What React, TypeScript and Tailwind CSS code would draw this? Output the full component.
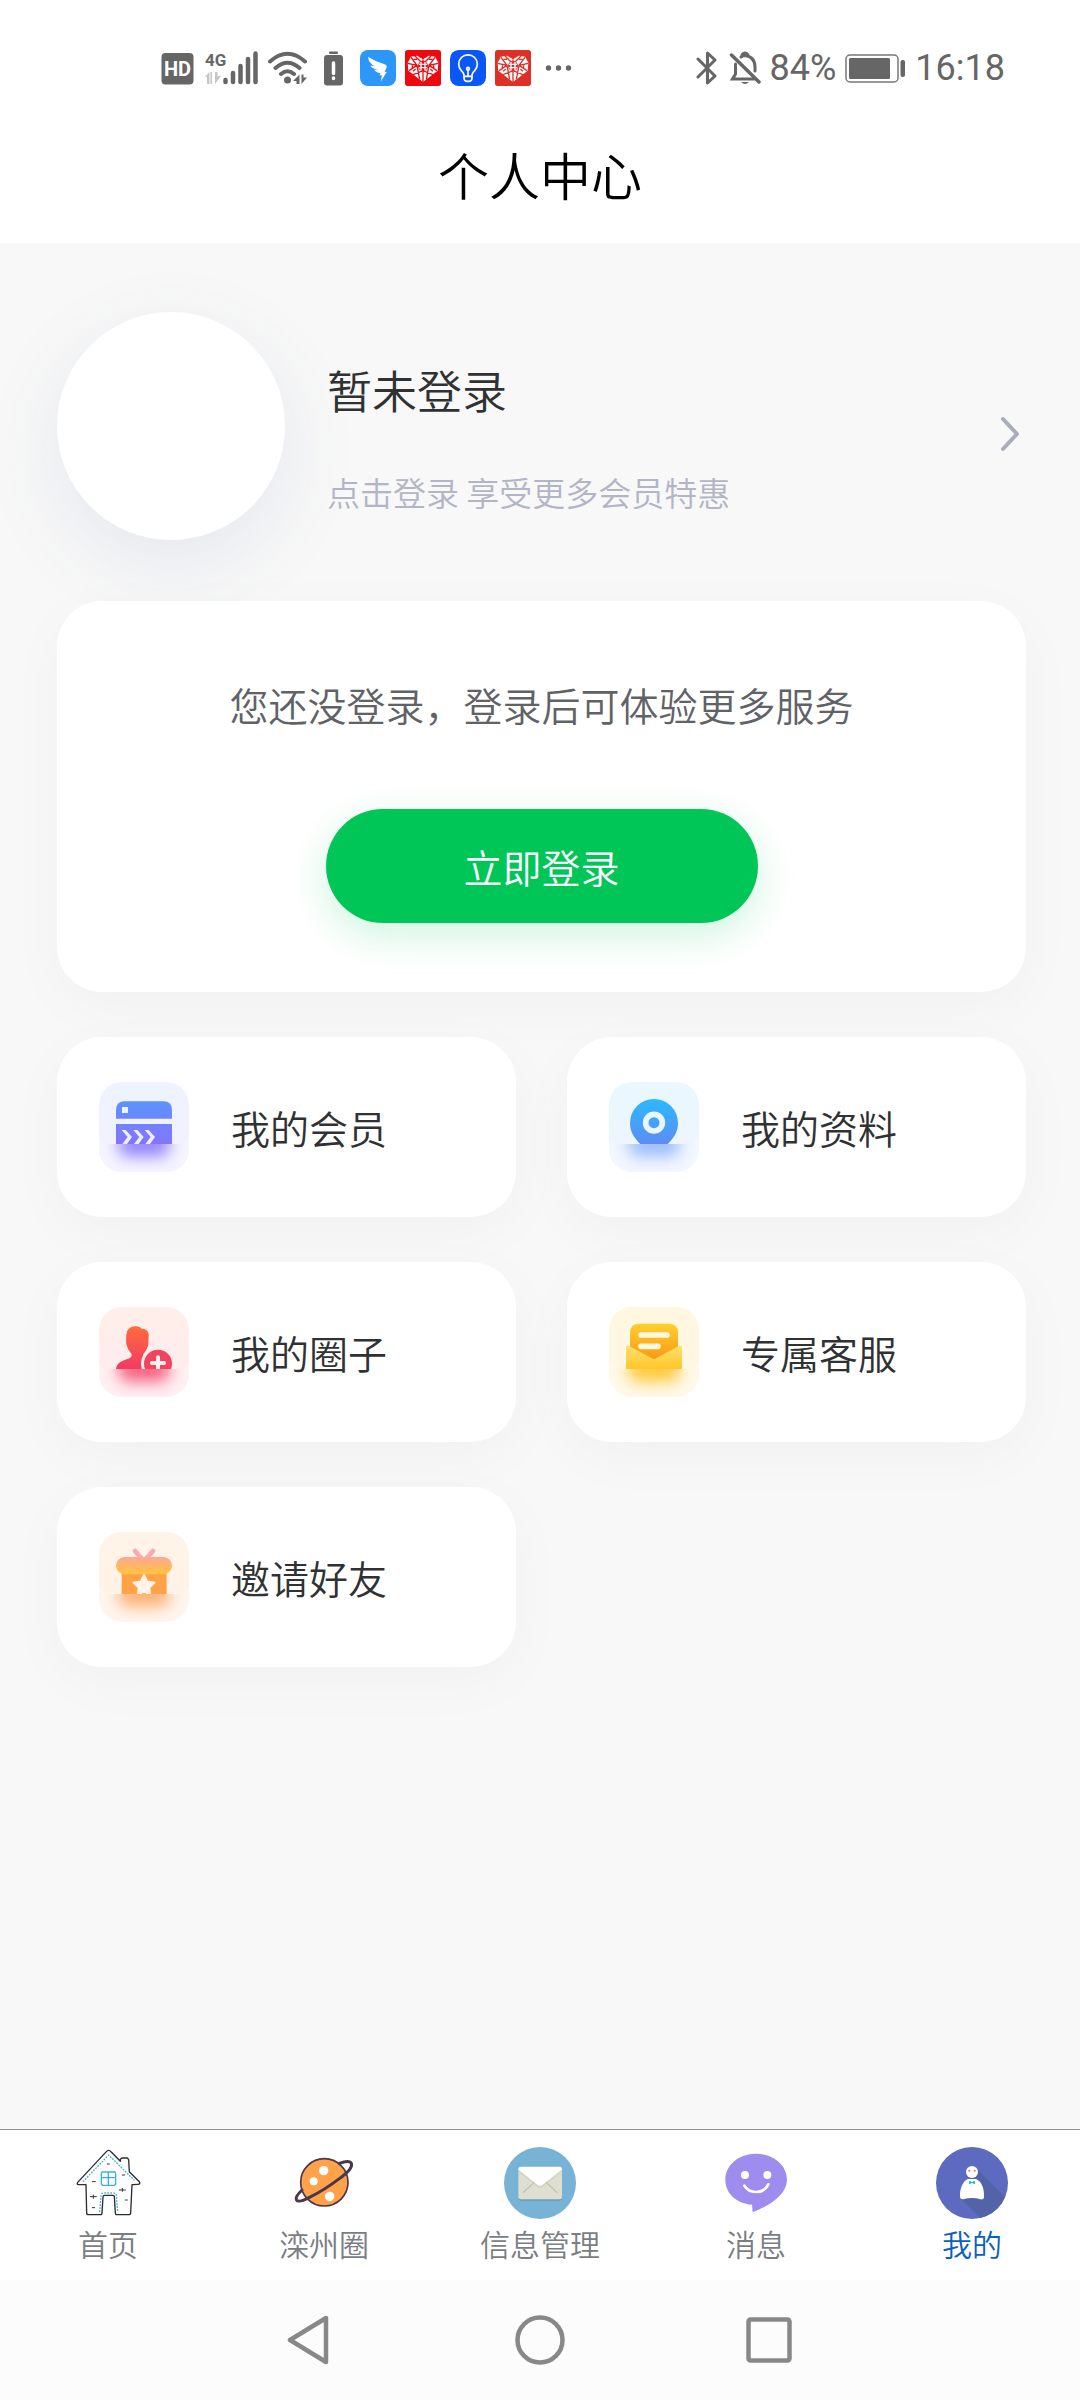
import React from 'react'
import { clsx } from 'clsx'

interface Entry {
  label: string
  icon: React.ReactNode
}

function Tile({
  id,
  from,
  to,
  glow,
  children,
}: {
  id: string
  from: string
  to: string
  glow: string
  children: React.ReactNode
}) {
  return (
    <svg viewBox="0 0 270 270" className="size-[90px] shrink-0" aria-hidden="true">
      <defs>
        <linearGradient id={`${id}-bg`} x1="0" y1="0" x2="0" y2="1">
          <stop offset="0" stopColor={from} />
          <stop offset="1" stopColor={to} />
        </linearGradient>
        <clipPath id={`${id}-top`}>
          <rect width="270" height="186" />
        </clipPath>
        <clipPath id={`${id}-bottom`}>
          <path d="M0 166 Q14 186 40 186 H230 Q256 186 270 166 V204 Q270 270 204 270 H66 Q0 270 0 204 Z" />
        </clipPath>
        <filter id={`${id}-blur`} x="-50%" y="-150%" width="200%" height="400%">
          <feGaussianBlur stdDeviation="22" />
        </filter>
      </defs>
      <rect width="270" height="270" rx="68" fill={`url(#${id}-bg)`} />
      <g clipPath={`url(#${id}-bottom)`}>
        <rect y="160" width="270" height="110" fill="#fff" opacity="0.25" />
        <rect x="58" y="150" width="154" height="74" rx="30" fill={glow} opacity="0.85" filter={`url(#${id}-blur)`} />
      </g>
      <g clipPath={`url(#${id}-top)`}>{children}</g>
    </svg>
  )
}

const MemberIcon = () => (
  <Tile id="member" from="#edf3ff" to="#f3f0ff" glow="#8271ff">
    <linearGradient id="member-fill" x1="0" y1="58" x2="0" y2="186" gradientUnits="userSpaceOnUse">
      <stop offset="0" stopColor="#5b93ff" />
      <stop offset="1" stopColor="#8474fd" />
    </linearGradient>
    <path d="M51 110 V84 Q51 58 77 58 H193 Q219 58 219 84 V110 Z M51 126 H219 V190 H51 Z" fill="url(#member-fill)" />
    <rect x="69" y="75" width="18" height="18" fill="#f1f4ff" />
    <path
      d="M68 144 H80 L99 165 L84 186 H70 L86 165 Z M103 144 H115 L134 165 L119 186 H105 L121 165 Z M137 144 H149 L168 165 L153 186 H139 L155 165 Z"
      fill="#eeeeff"
    />
  </Tile>
)

const ProfileIcon = () => (
  <Tile id="profile" from="#e9f8ff" to="#f0f3ff" glow="#8fb2fa">
    <linearGradient id="profile-fill" x1="0" y1="51" x2="0" y2="186" gradientUnits="userSpaceOnUse">
      <stop offset="0" stopColor="#2bb9ff" />
      <stop offset="1" stopColor="#5c8df3" />
    </linearGradient>
    <path d="M135 51 A72 72 0 0 1 207 123 C207 150 194 169 174 188 H96 C76 169 63 150 63 123 A72 72 0 0 1 135 51 Z" fill="url(#profile-fill)" />
    <circle cx="135" cy="122" r="25" fill="none" stroke="#e9f6ff" strokeWidth="17" />
  </Tile>
)

const CircleIcon = () => (
  <Tile id="group" from="#ffefe8" to="#ffeaf0" glow="#f5476c">
    <linearGradient id="group-fill" x1="0" y1="57" x2="0" y2="186" gradientUnits="userSpaceOnUse">
      <stop offset="0" stopColor="#ff6b3d" />
      <stop offset="1" stopColor="#f33a62" />
    </linearGradient>
    <path
      d="M84 73 Q92 57 112 58 Q123 59 128 65 Q147 65 149 82 L148 114 Q143 132 132 143 V190 H51 Q50 168 75 160 L91 154 Q99 150 98 142 Q85 128 82 112 Q80 88 84 73 Z"
      fill="url(#group-fill)"
    />
    <circle cx="177" cy="170" r="51" fill="#ffedec" />
    <circle cx="177" cy="170" r="42" fill="#f2445f" />
    <path d="M177 151 V185 M159 168 H195" stroke="#fff0ee" strokeWidth="12" strokeLinecap="round" />
  </Tile>
)

const ServiceIcon = () => (
  <Tile id="service" from="#fff7e0" to="#fff7e3" glow="#ffc01c">
    <linearGradient id="service-letter" x1="0" y1="50" x2="0" y2="157" gradientUnits="userSpaceOnUse">
      <stop offset="0" stopColor="#ffd02e" />
      <stop offset="1" stopColor="#f89a14" />
    </linearGradient>
    <linearGradient id="service-fold" x1="0" y1="116" x2="0" y2="186" gradientUnits="userSpaceOnUse">
      <stop offset="0" stopColor="#ffe06c" />
      <stop offset="1" stopColor="#ffc629" />
    </linearGradient>
    <rect x="63" y="50" width="144" height="125" rx="25" fill="url(#service-letter)" />
    <path d="M96 84 H174 M96 118 H147" stroke="#fff7e0" strokeWidth="17" strokeLinecap="round" />
    <path d="M51 122 Q51 114 60 117 L129 154 Q135 158 141 154 L210 117 Q219 114 219 122 V190 H51 Z" fill="url(#service-fold)" />
  </Tile>
)

const InviteIcon = () => (
  <Tile id="invite" from="#fff4e7" to="#fff2e9" glow="#ffa25c">
    <linearGradient id="invite-lid" x1="0" y1="75" x2="0" y2="127" gradientUnits="userSpaceOnUse">
      <stop offset="0" stopColor="#ffa794" />
      <stop offset="1" stopColor="#ffc43c" />
    </linearGradient>
    <path d="M130 82 L108 57 M140 82 L162 57" stroke="#f9a9b4" strokeWidth="14" strokeLinecap="round" />
    <rect x="68" y="120" width="135" height="70" fill="#ffa248" />
    <rect x="51" y="75" width="168" height="52" rx="26" fill="url(#invite-lid)" />
    <path
      d="M135 128 L145 148 L167 152 L151 168 L155 190 L135 179 L115 190 L119 168 L103 152 L125 148 Z"
      fill="#fff4e7"
      stroke="#fff4e7"
      strokeWidth="5"
      strokeLinejoin="round"
    />
  </Tile>
)

const HomeTabIcon = () => (
  <svg viewBox="0 0 216 216" className="size-[72px]" fill="none" strokeLinecap="round" strokeLinejoin="round" aria-hidden="true">
    <path
      d="M42 113 H20 Q13 112 17 106 L103 14 Q110 6 117 14 L145 43 V37 L150 33 H166 L170 38 L172 74 L202 104 Q206 112 198 112 L180 113 L176 197 Q176 203 170 203 H134 Q130 203 130 197 L127 148 Q126 145 122 145 H98 Q93 145 93 149 L90 197 Q90 203 85 203 H50 Q44 203 44 197 Z"
      stroke="#2c2c2c"
      strokeWidth="4"
    />
    <path d="M34 103 L110 24 L186 99 M83 193 L87 145 Q88 138 96 138 H122 Q132 138 133 145 L137 192" stroke="#3aaee0" strokeWidth="4" strokeDasharray="2 7" />
    <path d="M90 75 H129 L131 80 V112 L127 115 H92 L88 111 V78 Z M109 75 V115 M89 92 H130" stroke="#38b2e2" strokeWidth="4" />
    <path
      d="M106 51 H112 M151 84 H158 M61 104 H70 M142 129 H160 M151 124 V133 M55 149 H73 M64 144 V154 M160 159 H166 M61 182 H68"
      stroke="#333"
      strokeWidth="3"
    />
  </svg>
)

const PlanetTabIcon = () => (
  <svg viewBox="0 0 216 216" className="size-[72px]" aria-hidden="true">
    <circle cx="109" cy="106" r="71" fill="#ffa24a" stroke="#4a374b" strokeWidth="5" />
    <circle cx="107" cy="71" r="14" fill="#fff" />
    <circle cx="77" cy="103" r="12" fill="#fff" />
    <circle cx="125" cy="148" r="14" fill="#fff" />
    <path
      d="M154 49 Q184 38 190 49 Q196 65 158 92 Q110 129 63 152 Q31 169 25 158 Q21 149 42 129"
      fill="none"
      stroke="#4a374b"
      strokeWidth="9"
      strokeLinecap="round"
    />
  </svg>
)

const MailTabIcon = () => (
  <svg viewBox="0 0 216 216" className="size-[72px]" aria-hidden="true">
    <circle cx="108" cy="108" r="108" fill="#78b3d5" />
    <rect x="43" y="65" width="131" height="97" rx="8" fill="#5e8ea9" opacity="0.5" />
    <rect x="43" y="60" width="131" height="97" rx="7" fill="#dfdfd1" />
    <path d="M57 137 L92 105 M160 137 L125 105" stroke="#c3c3b2" strokeWidth="4" />
    <path d="M43 67 Q44 59 51 59 H166 Q173 59 174 67 L117 112 Q108 119 99 112 Z" fill="#fff" />
    <path d="M43 72 L99 117 Q108 124 117 117 L174 72" fill="none" stroke="#cdcdbd" strokeWidth="3" />
  </svg>
)

const MessageTabIcon = () => (
  <svg viewBox="0 0 216 216" className="size-[72px]" aria-hidden="true">
    <path d="M108 20 C160 20 201 54 201 98 C201 138 158 172 98 196 L96 173 C48 169 16 138 16 98 C16 54 57 20 108 20 Z" fill="#9f8cef" />
    <circle cx="75" cy="84" r="12" fill="#fff" />
    <circle cx="142" cy="84" r="12" fill="#fff" />
    <path d="M73 116 C88 142 132 142 145 112" fill="none" stroke="#fff" strokeWidth="8" strokeLinecap="round" />
  </svg>
)

const MineTabIcon = () => (
  <svg viewBox="0 0 216 216" className="size-[72px]" aria-hidden="true">
    <clipPath id="mine-clip">
      <circle cx="108" cy="108" r="108" />
    </clipPath>
    <circle cx="108" cy="108" r="108" fill="#5c6abf" />
    <path d="M120 63 L216 159 V216 H136 L74 154 Z" fill="#5263a8" clipPath="url(#mine-clip)" />
    <circle cx="108" cy="75" r="18" fill="#fff" />
    <path d="M96 96 H120 C138 103 146 128 144 152 Q142 158 134 157 Q108 149 82 157 Q73 158 72 150 C71 126 80 102 96 96 Z" fill="#fff" />
    <circle cx="100" cy="71" r="3" fill="#e9644f" />
    <circle cx="116" cy="71" r="3" fill="#e9644f" />
    <path d="M99 101 L108 105 L117 101 V112 L108 108 L99 112 Z" fill="#2bb5c8" />
  </svg>
)

const entries: Entry[] = [
  { label: '我的会员', icon: <MemberIcon /> },
  { label: '我的资料', icon: <ProfileIcon /> },
  { label: '我的圈子', icon: <CircleIcon /> },
  { label: '专属客服', icon: <ServiceIcon /> },
  { label: '邀请好友', icon: <InviteIcon /> },
]

const tabs: Entry[] = [
  { label: '首页', icon: <HomeTabIcon /> },
  { label: '滦州圈', icon: <PlanetTabIcon /> },
  { label: '信息管理', icon: <MailTabIcon /> },
  { label: '消息', icon: <MessageTabIcon /> },
  { label: '我的', icon: <MineTabIcon /> },
]

function HeartApp({ color }: { color: string }) {
  return (
    <svg viewBox="0 0 108 108" className="size-9" aria-hidden="true">
      <rect width="108" height="108" rx="8" fill={color} />
      <path d="M54 28 L72 17 L90 20 L100 38 L98 62 L54 96 L10 62 L8 38 L18 20 L36 17 Z" fill="#fff" />
      <path
        d="M54 28 V96 M30 18 L54 42 L78 18 M8 40 L36 46 L44 88 M100 40 L72 46 L64 88 M18 22 L36 46 L12 62 M90 22 L72 46 L96 62 M24 74 L54 62 L84 74 M22 46 V58 M86 46 V58 M26 28 H36 M72 28 H82 M32 58 L24 64 M76 58 L84 64"
        fill="none"
        stroke={color}
        strokeWidth="4"
      />
      <circle cx="54" cy="48" r="15" fill={color} />
      <path d="M48 36 V60 M60 36 V60 M42 43 H66 M42 53 H66" stroke="#fff" strokeWidth="4" />
    </svg>
  )
}

function StatusBar() {
  return (
    <div className="flex h-[136px] items-center justify-between pr-[75px] pl-[161px] font-[Roboto,sans-serif] text-[36px] leading-none text-[#666]">
      <div className="flex items-center gap-[9px]">
        <svg viewBox="0 0 35 36" className="h-9 w-[35px]">
          <rect x="0.5" y="3" width="32" height="31.5" rx="4" fill="#666" />
          <text x="16.5" y="26" textAnchor="middle" fontSize="20" fontWeight="700" fill="#fff">
            HD
          </text>
        </svg>
        <svg viewBox="0 0 54 36" className="h-9 w-[54px] overflow-visible" fill="#666">
          <text x="0" y="16" fontSize="17" fontWeight="700">
            4G
          </text>
          <path d="M4.5 22 V34 H2 V27 H0 Z M7 22 V34 H5.5 V22 Z M10 22 V34 L16 26 H12.5 V22 Z" fill="#c6c6c6" />
          <path d="M20.5 30 V32 M28 23 V32 M35.5 16 V32 M43 9 V32 M50.5 3.5 V32" stroke="#666" strokeWidth="4.5" strokeLinecap="round" />
        </svg>
        <svg viewBox="0 0 47 36" className="h-9 w-[47px]" fill="none" stroke="#666" strokeWidth="4" strokeLinecap="round">
          <path d="M2 11.5 Q19.5 -4 37 11.5 M7.5 18 Q19.5 7.5 31.5 18 M13 24 Q19.5 18.5 26 24" />
          <circle cx="19.5" cy="30" r="3.5" fill="#666" stroke="none" />
          <path d="M31.5 24.5 V34 H28.5 V31 H25 Z M33.5 24.5 V34 L39 27.5 H35.5 V24.5 Z" fill="#666" stroke="none" />
        </svg>
        <svg viewBox="0 0 27 36" className="h-9 w-[27px]" fill="#666">
          <rect x="5" y="1.5" width="9" height="2.5" rx="1" />
          <rect x="0" y="5" width="19" height="30.5" rx="3" />
          <path d="M9.5 13 V23.5 M9.5 28 V28.5" stroke="#fff" strokeWidth="3.5" strokeLinecap="round" />
        </svg>
        <svg viewBox="0 0 108 108" className="size-9">
          <rect width="108" height="108" rx="24" fill="#2c97f8" />
          <path d="M24 20 Q45 34 72 42 Q82 46 80 52 L74 66 H80 L62 95 L66 76 H58 L62 70 Q46 66 42 59 L54 60 Q34 54 31 47 L44 48 Q26 40 24 20 Z" fill="#fff" />
        </svg>
        <HeartApp color="#ee0810" />
        <svg viewBox="0 0 108 108" className="size-9" fill="none" stroke="#fff" strokeWidth="5">
          <rect width="108" height="108" rx="26" fill="#0b56f6" stroke="none" />
          <path d="M42 74 Q40 68 34 62 A28 28 0 1 1 74 62 Q68 68 66 74 V84 Q66 94 56 94 H52 Q42 94 42 84 Z M42 79 H66 M54 60 V78" strokeLinejoin="round" />
          <circle cx="54" cy="56" r="4" />
        </svg>
        <HeartApp color="#dd3027" />
        <svg viewBox="0 0 36 36" className="size-9" fill="#666">
          <circle cx="8.5" cy="18" r="2.7" />
          <circle cx="18.5" cy="18" r="2.7" />
          <circle cx="28.5" cy="18" r="2.7" />
        </svg>
      </div>
      <div className="flex items-center gap-[9px] font-normal">
        <svg viewBox="0 0 24 36" className="h-9 w-6" fill="none" stroke="#666" strokeWidth="3" strokeLinecap="round" strokeLinejoin="round">
          <path d="M2 9 L19 26 L11.5 33 V3 L19 10 L2 27" />
        </svg>
        <svg viewBox="0 0 32 36" className="h-9 w-8" fill="none" stroke="#666" strokeWidth="3" strokeLinecap="round">
          <path d="M2.5 5 L30 32" strokeWidth="3.5" />
          <path d="M12 7 Q14 5.5 16 5.5 Q26 7 26 17 V21 M6.5 14 V24 L3.5 29 H25" />
          <path d="M13.5 5 Q16 2 18.5 5" strokeWidth="4" />
          <path d="M12 32 H20 Q16 36 12 32 Z" fill="#666" stroke="none" />
        </svg>
        <span>84%</span>
        <svg viewBox="0 0 61 36" className="h-9 w-[61px]" fill="#666">
          <rect x="1" y="5" width="52" height="27" rx="4" fill="none" stroke="#777" strokeWidth="1.5" />
          <rect x="4" y="8" width="41" height="21" rx="1.5" />
          <rect x="55.5" y="10" width="4.5" height="17" rx="2" />
        </svg>
        <span>16:18</span>
      </div>
    </div>
  )
}

function SystemNav() {
  return (
    <div className="flex h-[120px] items-center justify-center gap-[180px] bg-[#fcfcfc]">
      <button type="button" aria-label="返回">
        <svg viewBox="0 0 50 50" className="size-[50px]" fill="none" stroke="#888" strokeWidth="4.5" strokeLinejoin="round">
          <path d="M41 3 V47 L5 25 Z" />
        </svg>
      </button>
      <button type="button" aria-label="主屏幕">
        <svg viewBox="0 0 50 50" className="size-[50px]" fill="none" stroke="#888" strokeWidth="4.5">
          <circle cx="25" cy="25" r="22.5" />
        </svg>
      </button>
      <button type="button" aria-label="最近任务">
        <svg viewBox="0 0 50 50" className="size-[50px]" fill="none" stroke="#888" strokeWidth="4.5">
          <rect x="3.5" y="4.5" width="41" height="41" rx="2" />
        </svg>
      </button>
    </div>
  )
}

export default function App() {
  return (
    <div className="flex min-h-screen flex-col bg-[#f8f8f8] font-['Noto_Sans_CJK_SC',sans-serif] font-[350] text-[#303133]">
      <header className="bg-white pb-[31px]">
        <StatusBar />
        <h1 className="text-center text-[51px] leading-[76px] text-black">个人中心</h1>
      </header>

      <main className="flex grow flex-col pt-[69px] pr-[54px] pl-[57px]">
        <button type="button" className="flex items-center text-left">
          <span className="size-[228px] shrink-0 rounded-full bg-white shadow-[0_24px_80px_rgba(70,90,150,0.1)]" />
          <span className="ml-[42px] flex grow flex-col gap-[45px] pt-[21px]">
            <span className="text-[45px] leading-[66px]">暂未登录</span>
            <span className="text-[33px] leading-[48px] text-[#b2b5c5]">点击登录 享受更多会员特惠</span>
          </span>
          <svg viewBox="0 0 27 36" className="mt-4 h-9 w-[27px]" fill="none" stroke="#a9adbb" strokeWidth="4" strokeLinecap="round" strokeLinejoin="round" aria-hidden="true">
            <path d="M4 3 L18 18 L4 33" />
          </svg>
        </button>

        <section className="mt-[61px] flex flex-col items-center rounded-[45px] bg-white pt-[76px] pb-[69px] shadow-[0_15px_60px_rgba(0,0,0,0.03)]">
          <p className="text-[39px] leading-[54px] text-[#606266]">您还没登录，登录后可体验更多服务</p>
          <button
            type="button"
            className="mt-[78px] h-[114px] w-[432px] rounded-full bg-[#00c658] text-[39px] text-white shadow-[0_12px_40px_rgba(3,199,90,0.2)]"
          >
            立即登录
          </button>
        </section>

        <div className="mt-[45px] grid grid-cols-2 gap-x-[51px] gap-y-[45px]">
          {entries.map((entry) => (
            <button
              key={entry.label}
              type="button"
              className="flex h-[180px] items-center gap-[42px] rounded-[45px] bg-white pl-[42px] text-left text-[39px] shadow-[0_15px_60px_rgba(0,0,0,0.03)]"
            >
              {entry.icon}
              {entry.label}
            </button>
          ))}
        </div>
      </main>

      <footer>
        <nav className="grid h-[151px] grid-cols-5 border-t border-[#8f8f8f] bg-white">
          {tabs.map((tab) => (
            <a
              key={tab.label}
              href="#"
              aria-current={tab.label === '我的' ? 'page' : undefined}
              className={clsx(
                'flex flex-col items-center gap-0.5 pt-[17px] text-[30px] leading-[44px]',
                tab.label === '我的' ? 'text-[#0a5fc0]' : 'text-[#7a7e83]',
              )}
            >
              {tab.icon}
              {tab.label}
            </a>
          ))}
        </nav>
        <SystemNav />
      </footer>
    </div>
  )
}
